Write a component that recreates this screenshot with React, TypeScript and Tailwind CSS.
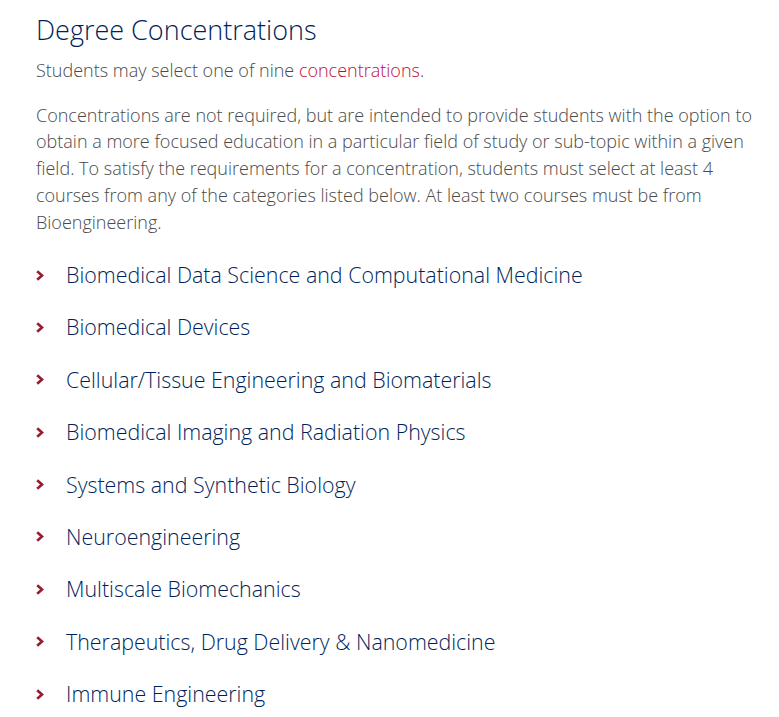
import React from "react";

const items = [
  "Biomedical Data Science and Computational Medicine",
  "Biomedical Devices",
  "Cellular/Tissue Engineering and Biomaterials",
  "Biomedical Imaging and Radiation Physics",
  "Systems and Synthetic Biology",
  "Neuroengineering",
  "Multiscale Biomechanics",
  "Therapeutics, Drug Delivery & Nanomedicine",
  "Immune Engineering",
];

function Chevron() {
  return (
    <svg width="8" height="11" viewBox="0 0 8 11" className="shrink-0">
      <path d="M1.2 1.3 L6 5.5 L1.2 9.7" fill="none" stroke="#951d2e" strokeWidth="2.6" />
    </svg>
  );
}

export default function App() {
  return (
    <div className="bg-white min-h-[717px] pl-[36px] pt-[12px] font-['Open_Sans',sans-serif]">
      <h2 className="text-[27px] leading-[36px] font-light text-[#011f5b]">Degree Concentrations</h2>
      <p className="mt-[8.5px] text-[18px] leading-[27px] font-light text-[#4a4a4a]">
        Students may select one of nine <span className="text-[#c00d3d]">concentrations</span>.
      </p>
      <p className="mt-[18px] text-[18px] leading-[26.75px] font-light text-[#4a4a4a] w-[725px]">
        Concentrations are not required, but are intended to provide students with the option to obtain a more focused
        education in a particular field of study or sub-topic within a given field. To satisfy the requirements for a
        concentration, students must select at least 4 courses from any of the categories listed below. At least two
        courses must be from Bioengineering.
      </p>
      <ul className="mt-[24.75px] flex flex-col gap-[22.4px]">
        {items.map((t) => (
          <li key={t} className="flex items-center gap-[22px] h-[30px]">
            <Chevron />
            <span className="text-[21.4px] leading-[30px] font-light text-[#011f5b]">{t}</span>
          </li>
        ))}
      </ul>
    </div>
  );
}
